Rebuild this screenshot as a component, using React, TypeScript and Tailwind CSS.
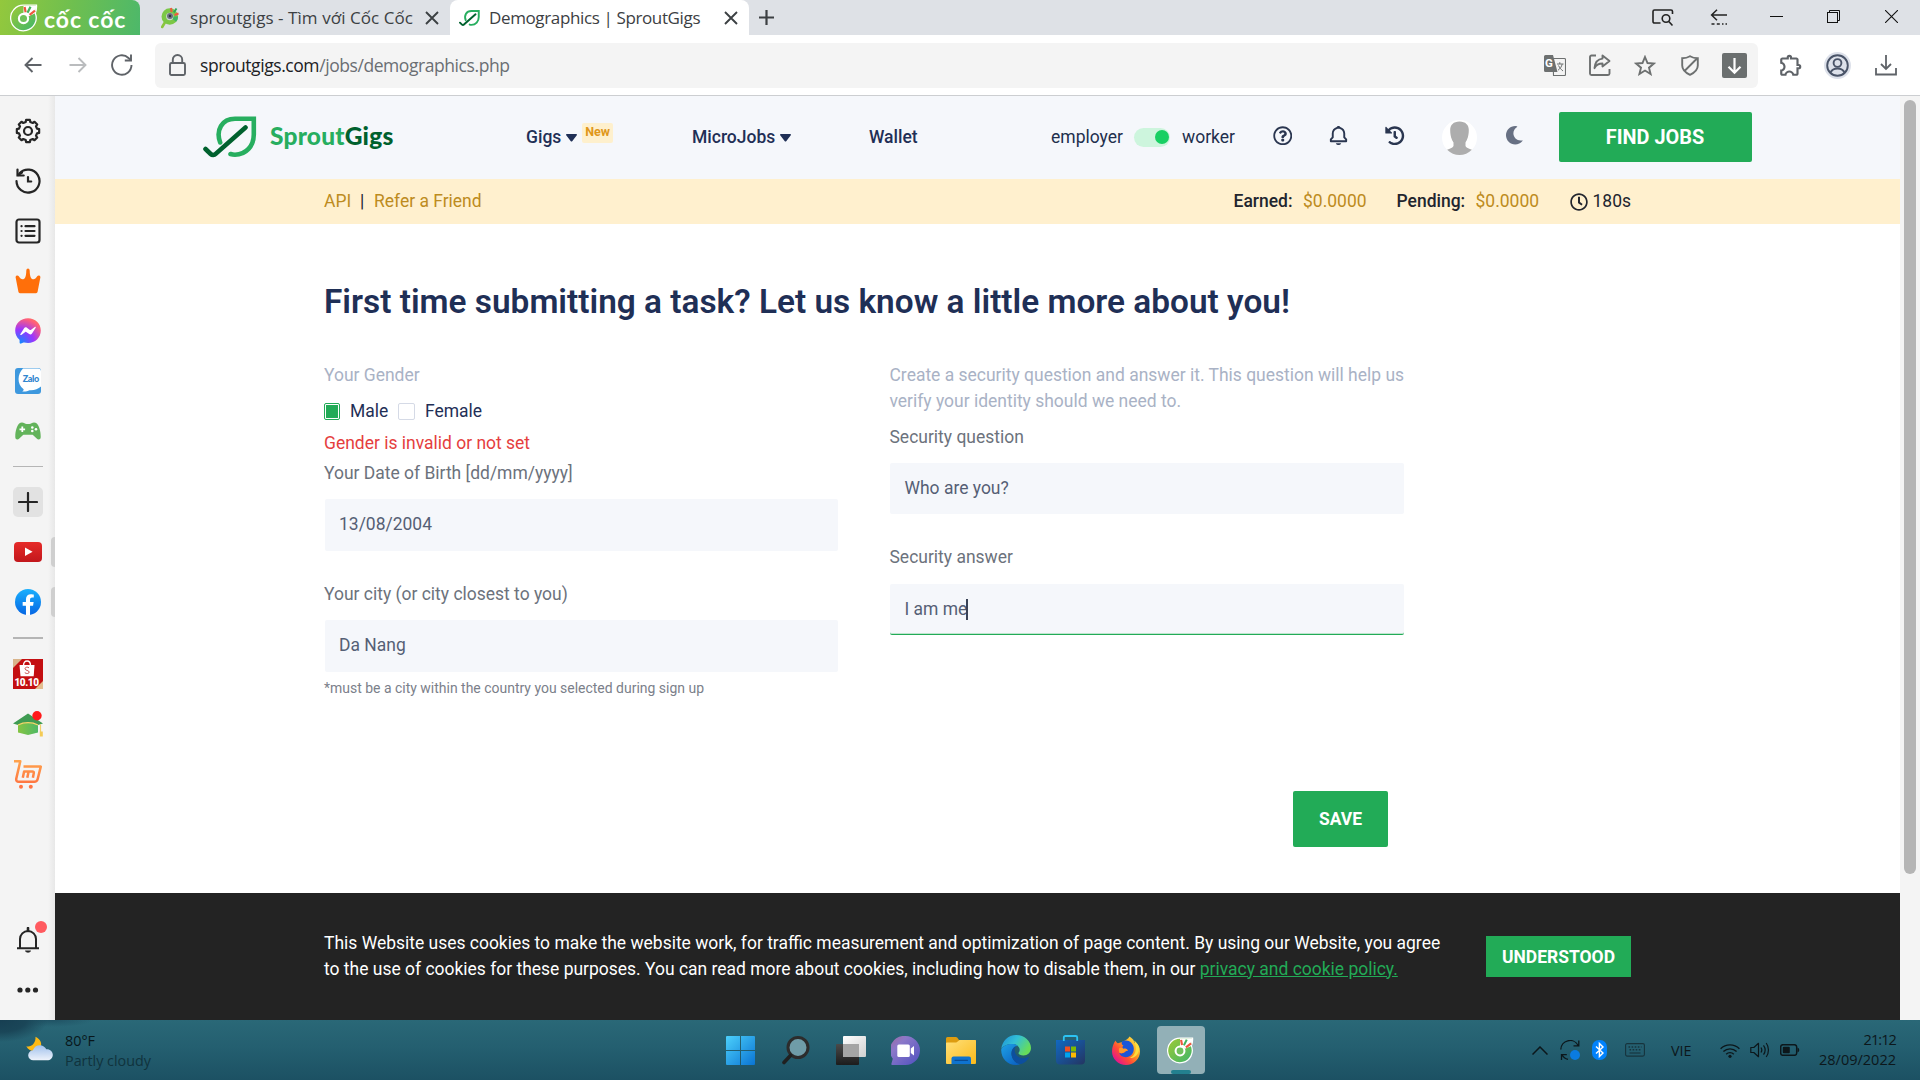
import type { ReactNode } from "react";
import { FaHistory, FaMoon, FaRegClock, FaRegQuestionCircle } from "react-icons/fa";
import { BiBell } from "react-icons/bi";
import { MdOutlineExtension } from "react-icons/md";

const SEGOE = "font-['Open_Sans',sans-serif]";

/* ---------- brand marks ---------- */

function CocCocMark({ size, id }: { size: number; id: string }) {
  return (
    <svg width={size} height={size} viewBox="0 0 28 28" fill="none">
      <defs>
        <linearGradient id={id} x1="0" y1="0" x2="1" y2="1">
          <stop offset="0.2" stopColor="#8cc63f" />
          <stop offset="1" stopColor="#3bb56b" />
        </linearGradient>
      </defs>
      <path d="M14 1.2h12.500c.2 3-.2 5.500-1.200 8A12.800 12.800 0 1 1 14 1.200z" fill={`url(#${id})`} stroke="#fff" strokeWidth="1.300" />
      <path d="M13.500 1.900 26 1.900c.1 3-.3 5.200-1.300 7.600l-6 2.800-5.200-3z" fill="#fff" />
      <circle cx="13.500" cy="14.500" r="4.600" stroke="#fff" strokeWidth="2.100" fill="#6fc15a" />
      <path d="m14.600 3 1 5.300" stroke="#f0563f" strokeWidth="2.200" />
      <path d="m20.500 2.700-3 6" stroke="#43b35c" strokeWidth="2.200" />
      <path d="m25 6.700-5.400 4.100" stroke="#f0563f" strokeWidth="2.200" />
    </svg>
  );
}

function CocSearchMark() {
  return (
    <svg width="19" height="22" viewBox="0 0 19 22" fill="none">
      <path d="M4.500 14.500 1.200 20" stroke="#8bc53f" strokeWidth="2.600" strokeLinecap="round" />
      <circle cx="8.800" cy="9.500" r="6" stroke="#7cc746" strokeWidth="4.600" fill="#c9d6cf" />
      <path d="M13.500 13.500a6 6 0 0 0 1.300-4" stroke="#3eb564" strokeWidth="4.400" />
      <circle cx="9" cy="9" r="3" fill="#6b717e" />
      <circle cx="9" cy="9" r="1.200" fill="#2f3440" />
      <path d="m10 1 .6 4M17.500 6.500 13.500 8" stroke="#f0563f" strokeWidth="2" />
      <path d="m15.500 1.500-2.700 4" stroke="#2fa55a" strokeWidth="2" />
    </svg>
  );
}

function SproutMark({ width, height, sw }: { width: number; height: number; sw: number }) {
  return (
    <svg width={width} height={height} viewBox="0 0 54 42" fill="none" strokeWidth={sw} strokeLinecap="round">
      <path d="M17.200 26.500C12.500 14 19 2.800 32 2.800h18.800v15.700c0 11.500-7.800 20.200-18.800 20.200-1.600 0-3-.2-4.500-.7" stroke="#27ae5f" />
      <path d="m2.500 33 5.200 5c1.500 1.400 3.600 1.300 5-.1L42.500 11.500" stroke="#00612e" />
    </svg>
  );
}

/* ---------- sidebar icons ---------- */

function gearPath() {
  const pts: string[] = [];
  for (let i = 0; i < 8; i++) {
    const base = (i * Math.PI) / 4;
    const steps: [number, number][] = [
      [-0.25, 9.3],
      [-0.17, 11.3],
      [0.17, 11.3],
      [0.25, 9.3],
    ];
    for (const [da, r] of steps) {
      pts.push(`${(13 + r * Math.sin(base + da)).toFixed(2)} ${(13 - r * Math.cos(base + da)).toFixed(2)}`);
    }
  }
  return `M${pts.join("L")}Z`;
}

function GearIcon() {
  return (
    <svg width="26" height="26" viewBox="0 0 26 26" fill="none" stroke="#252525" strokeWidth="2.200" strokeLinejoin="round">
      <path d={gearPath()} />
      <circle cx="13" cy="13" r="4" />
    </svg>
  );
}

function SideHistoryIcon() {
  return (
    <svg width="26" height="26" viewBox="0 0 26 26" fill="none" stroke="#252525" strokeWidth="2.200" strokeLinecap="round">
      <path d="M1.500 13A11.500 11.500 0 1 0 4.600 5.200" />
      <path d="M2.500 1.500v6h6.200" />
      <path d="M3 7 7 4.500" />
      <path d="M13 9v4.500h3.200" />
    </svg>
  );
}

function ListIcon() {
  return (
    <svg width="26" height="26" viewBox="0 0 26 26" fill="none" stroke="#252525" strokeWidth="2.200" strokeLinecap="round">
      <rect x="1.500" y="1.500" width="23" height="23" rx="2.500" />
      <path d="M10.500 8.200h9M10.500 13h9M10.500 17.800h9M6.500 8.200h.1M6.500 13h.1M6.500 17.800h.1" />
    </svg>
  );
}

function CrownIcon() {
  return (
    <svg width="26" height="26" viewBox="0 0 26 26" fill="#ff6f0a">
      <path d="M.6 9.200c0-1.800 2.300-2.300 3.200-.9 1.200 2 2.300 3 3.800 3 2.300 0 3.600-2.500 3.700-8.500C11.400-.2 14.600-.2 14.700 2.800c.1 6 1.400 8.500 3.700 8.500 1.500 0 2.600-1 3.800-3 .9-1.400 3.300-.9 3.200.9l-2.800 14.600c-.2.900-.7 1.400-1.600 1.400H5c-.9 0-1.400-.5-1.600-1.400z" />
    </svg>
  );
}

function MessengerIcon() {
  return (
    <svg width="26" height="26" viewBox="0 0 26 26">
      <defs>
        <radialGradient id="msgr" cx="0.190" cy="0.990" r="1.100">
          <stop offset="0" stopColor="#0a8dff" />
          <stop offset="0.5" stopColor="#9a35ff" />
          <stop offset="0.900" stopColor="#ff5f7a" />
          <stop offset="1" stopColor="#ff7061" />
        </radialGradient>
      </defs>
      <path d="M13 .3C5.800.3.200 5.500.200 12.500c0 3.700 1.500 6.900 4 9.100.3.300.4.600.4 1v2c0 .9.600 1.400 1.500 1l2.400-1c.2-.1.400-.1.700 0 1.200.3 2.400.5 3.800.5 7.200 0 12.800-5.300 12.800-12.500S20.200.3 13 .3z" fill="url(#msgr)" />
      <path d="m5.300 16.200 3.800-6c.6-1 1.900-1.200 2.800-.5l3 2.200c.3.200.6.200.9 0l4-3c.5-.4 1.200.2.900.8L17 15.600c-.6 1-1.900 1.200-2.800.5l-3-2.200c-.3-.2-.6-.2-.9 0l-4 3c-.6.400-1.300-.1-1-.7z" fill="#fff" />
    </svg>
  );
}

function ZaloIcon() {
  return (
    <span className="relative flex h-[26px] w-[26px] items-center justify-end">
      <svg className="absolute inset-0" width="26" height="26" viewBox="0 0 26 26">
        <rect width="26" height="26" rx="3" fill="#3d98de" />
        <path d="M8 .6h15a3 3 0 0 1 3 3v15c-3 2.500-7 4-11.500 3.600-2 1.300-5 1.500-7.300 1.200 1-.6 1.600-1.300 1.400-2.200C1.500 16 2.500 6 8 .6z" fill="#fff" />
      </svg>
      <span className="relative mr-[1.500px] mb-[5px] font-[Lato,sans-serif] text-[9px] leading-none font-black tracking-[-0.300px] text-[#2f86cf]">Zalo</span>
    </span>
  );
}

function GamepadIcon() {
  return (
    <svg width="26" height="18" viewBox="0 0 26 18">
      <path d="M4.200 1.500C5.500.3 8 .2 9.500 1.300c.7.500 1.300.6 2 .6h3c.7 0 1.300-.1 2-.6 1.500-1.100 4-1 5.300.2C24.300 4 25.900 10 25.700 15.300c-.1 2.400-2.500 2.800-4 1.300l-3.500-3.300c-.4-.4-.8-.5-1.300-.5H9.100c-.5 0-.9.100-1.300.5l-3.500 3.300c-1.500 1.500-3.900 1.100-4-1.300C.1 10 1.700 4 4.200 1.500z" fill="#63b35b" />
      <path d="M7.300 4.500v5.600M4.500 7.300h5.600" stroke="#fff" strokeWidth="1.800" />
      <circle cx="17.300" cy="5.500" r="1.300" fill="#fff" />
      <circle cx="21" cy="7.200" r="1.300" fill="#fff" />
      <circle cx="17.300" cy="9" r="1.300" fill="#fff" />
    </svg>
  );
}

function YoutubeIcon() {
  return (
    <svg width="28" height="20" viewBox="0 0 28 20">
      <defs>
        <linearGradient id="yt" x1="0" y1="0" x2="0" y2="1">
          <stop offset="0" stopColor="#e62b29" />
          <stop offset="1" stopColor="#c2171c" />
        </linearGradient>
      </defs>
      <rect width="28" height="20" rx="4" fill="url(#yt)" />
      <path d="m11 5.500 7.600 4.300L11 14z" fill="#fff" />
    </svg>
  );
}

function FacebookIcon() {
  return (
    <svg width="26" height="26" viewBox="0 0 24 24">
      <defs>
        <linearGradient id="fb" x1="0" y1="0" x2="0" y2="1">
          <stop offset="0" stopColor="#1ab0fd" />
          <stop offset="1" stopColor="#0666e4" />
        </linearGradient>
      </defs>
      <circle cx="12" cy="12" r="12" fill="url(#fb)" />
      <path d="M16.671 15.543l.532-3.470h-3.328v-2.250c0-.949.465-1.874 1.956-1.874h1.513V4.996s-1.374-.235-2.686-.235c-2.741 0-4.533 1.662-4.533 4.669v2.642H7.078v3.470h3.047v8.385a12.100 12.100 0 003.750 0v-8.385h2.796z" fill="#fff" />
    </svg>
  );
}

function ShopeeIcon() {
  return (
    <span className="relative flex h-[30px] w-[30px] items-end justify-center overflow-hidden bg-[#c40f12]">
      <svg className="absolute inset-0" width="30" height="30" viewBox="0 0 30 30" fill="none">
        <path d="M0 0h9L0 9z" fill="#d9b48b" />
        <path d="M30 30h-8l8-8z" fill="#e3bd8f" />
        <path d="M10.500 6.500C10.500 3.500 12 2 14 2s3.500 1.500 3.500 4.500" stroke="#fff" strokeWidth="1.400" />
        <path d="M6.500 6h15l-.8 11.300H7.500z" fill="#fff" />
        <path d="M16 8.800c-1.500-1.200-4-.6-4 .9 0 2 4.200 1.500 4.200 3.300 0 1.800-2.700 2-4.400.7" stroke="#c8504f" strokeWidth="1" />
      </svg>
      <span className="relative mr-[2px] mb-[2.500px] font-[Roboto,sans-serif] text-[10px] leading-[9px] font-black tracking-[-0.400px] text-white">10.10</span>
    </span>
  );
}

function HatIcon() {
  return (
    <svg width="30" height="28" viewBox="0 0 30 28">
      <defs>
        <linearGradient id="hat" x1="0" y1="0" x2="1" y2="0">
          <stop offset="0" stopColor="#85c442" />
          <stop offset="1" stopColor="#4fb966" />
        </linearGradient>
      </defs>
      <path d="M5 12h20v10.500l-10 2.500-10-2.500z" fill="url(#hat)" />
      <path d="M0 13.500 15 3.500l15 10-5 1.500-10-2.300-10 2.300z" fill="#3f9b52" />
      <path d="M5 15c6-3 14-3 20 0" stroke="#f6d66a" strokeWidth="1.300" fill="none" />
      <path d="M27.500 14.500v8" stroke="#f3cf69" strokeWidth="1.200" />
      <path d="M26.800 21.500h3v5h-3z" fill="#f4cb55" />
      <circle cx="24" cy="5.800" r="4.700" fill="#ff1a1a" />
    </svg>
  );
}

function CartIcon() {
  return (
    <svg width="28" height="30" viewBox="0 0 28 30" fill="none">
      <defs>
        <linearGradient id="cart" gradientUnits="userSpaceOnUse" x1="14" y1="0" x2="14" y2="30">
          <stop offset="0" stopColor="#ffa64d" />
          <stop offset="1" stopColor="#ff6b3f" />
        </linearGradient>
      </defs>
      <g stroke="url(#cart)" strokeWidth="2.500" strokeLinejoin="round">
        <path d="M0 2.300h6.300L2.300 19.500c-.4 2.200.6 3.300 2.500 3.300h15.500c1.800 0 2.900-.9 3.300-2.500L26.800 7.600H9.500" />
        <path d="M8.800 18.800l1.300-6.300h8.200c1.200 0 1.700.6 1.500 1.600l-.9 4.700M14.600 12.500l-1.300 6.300" />
      </g>
      <circle cx="7" cy="27.800" r="2" fill="#ff7442" />
      <circle cx="16.800" cy="27.800" r="2" fill="#ff7442" />
    </svg>
  );
}

function SideCell({ children, handle }: { children: ReactNode; handle?: boolean }) {
  return (
    <div className="relative flex h-[50px] w-full items-center">
      <div className="flex w-[55px] items-center justify-center">{children}</div>
      {handle && <span className="absolute top-[10px] right-0 h-[30px] w-1 rounded-l-[4px] bg-[#cfcfcf]" />}
    </div>
  );
}

function Sidebar() {
  return (
    <aside className="flex w-[55px] shrink-0 flex-col bg-[linear-gradient(to_right,#f4f4f4_0,#f4f4f4_48px,#e8e8e8_55px)] pt-[10px]">
      <SideCell><GearIcon /></SideCell>
      <SideCell><SideHistoryIcon /></SideCell>
      <SideCell><ListIcon /></SideCell>
      <SideCell><CrownIcon /></SideCell>
      <SideCell><MessengerIcon /></SideCell>
      <SideCell><ZaloIcon /></SideCell>
      <SideCell><GamepadIcon /></SideCell>
      <div className="mt-[10px] mb-[10px] ml-[13px] h-px w-[30px] bg-[#b5b5b5]" />
      <SideCell>
        <span className="flex h-[30px] w-[30px] items-center justify-center rounded-[5px] bg-[#e2e2e2]">
          <svg width="20" height="20" viewBox="0 0 20 20" stroke="#252525" strokeWidth="2.200" strokeLinecap="round">
            <path d="M10 1v18M1 10h18" />
          </svg>
        </span>
      </SideCell>
      <SideCell handle><YoutubeIcon /></SideCell>
      <SideCell handle><FacebookIcon /></SideCell>
      <div className="mt-[10px] mb-[10px] ml-[13px] h-[2px] w-[30px] bg-[#b5b5b5]" />
      <SideCell><ShopeeIcon /></SideCell>
      <SideCell><HatIcon /></SideCell>
      <SideCell><CartIcon /></SideCell>
      <div className="mt-auto" />
      <SideCell>
        <svg width="24" height="26" viewBox="0 0 24 26" fill="none" stroke="#252525" strokeWidth="2">
          <path d="M4 21v-9a8 8 0 0 1 16 0v9M1 21.300h22" />
          <path d="M12 1v3" strokeWidth="2.600" strokeLinecap="round" />
          <path d="M9.500 24c1 1.500 4 1.500 5 0z" fill="#252525" strokeWidth="1" />
        </svg>
        <span className="absolute top-[6px] left-[35px] h-[12px] w-[12px] rounded-full bg-[#ff5a5f]" />
      </SideCell>
      <SideCell>
        <svg width="22" height="6" viewBox="0 0 22 6" fill="#252525">
          <circle cx="3" cy="3" r="2.600" />
          <circle cx="10.800" cy="3" r="2.600" />
          <circle cx="18.500" cy="3" r="2.600" />
        </svg>
      </SideCell>
      <div className="h-[5px]" />
    </aside>
  );
}

/* ---------- browser chrome ---------- */

function CloseX() {
  return (
    <svg width="14" height="14" viewBox="0 0 14 14" fill="none" stroke="#3c4043" strokeWidth="1.900">
      <path d="m1 1 12 12M13 1 1 13" />
    </svg>
  );
}

function TabStrip() {
  return (
    <div className="flex h-[35px] bg-[#dee1e6] text-[#3c4043]">
      <div className="flex w-[140px] shrink-0 items-center rounded-tr-[8px] bg-[linear-gradient(100deg,#93c83d_0%,#6fbf4f_50%,#4db86a_100%)] pl-[10px]">
        <CocCocMark size={28} id="cc-tab" />
        <span className="mt-[3px] ml-[6px] font-[Lato,sans-serif] text-[23px] leading-[32px] font-bold tracking-[0.900px] whitespace-nowrap text-white">cốc cốc</span>
      </div>
      <div className="flex w-[310px] shrink-0 items-center pl-[21px]">
        <CocSearchMark />
        <span className={`${SEGOE} ml-[10px] w-[235px] text-[17px] tracking-[0.060px] whitespace-nowrap`}>sproutgigs - Tìm với Cốc Cốc</span>
        <CloseX />
      </div>
      <div className="flex w-[299px] shrink-0 items-center rounded-t-[8px] bg-white pl-[9px]">
        <SproutMark width={21} height={18} sw={5} />
        <span className={`${SEGOE} ml-[9px] w-[235px] text-[17px] tracking-[-0.370px] whitespace-nowrap`}>Demographics | SproutGigs</span>
        <CloseX />
      </div>
      <div className="flex flex-1 items-center pl-[10px]">
        <svg width="15" height="15" viewBox="0 0 15 15" stroke="#3c4043" strokeWidth="2.200">
          <path d="M7.500 0v15M0 7.500h15" />
        </svg>
      </div>
      <div className="flex items-center pr-[22px]">
        <svg width="22" height="18" viewBox="0 0 22 18" fill="none" stroke="#222" strokeWidth="1.600">
          <path d="M8.500 14H2.500A1.500 1.500 0 0 1 1 12.500v-10A1.500 1.500 0 0 1 2.500 1h16.500A1.500 1.500 0 0 1 20.500 2.500v2.500" />
          <circle cx="14" cy="9.500" r="3.800" />
          <path d="m16.800 12.500 3.700 4" />
        </svg>
        <svg className="ml-[36px]" width="18" height="17" viewBox="0 0 18 17" fill="none" stroke="#222" strokeWidth="1.500">
          <path d="M1.500 6h15.500M7 .8 1.600 6 7 11.200" />
          <path d="M1.500 15h3M6.800 15h3M12 15h1.500M15.500 15h1.500" />
        </svg>
        <svg className="ml-[42px]" width="13" height="13" viewBox="0 0 13 13" stroke="#111" strokeWidth="1">
          <path d="M0 5.500h13" />
        </svg>
        <svg className="mb-[2px] ml-[44px]" width="13" height="13" viewBox="0 0 13 13" fill="none" stroke="#111" strokeWidth="1">
          <rect x="0.500" y="2.500" width="10" height="10" />
          <path d="M2.500 2.500v-2h10v10h-2" />
        </svg>
        <svg className="mb-[2px] ml-[45px]" width="13" height="13" viewBox="0 0 13 13" stroke="#111" strokeWidth="1.100">
          <path d="m0 0 13 13M13 0 0 13" />
        </svg>
      </div>
    </div>
  );
}

function ToolIcon({ children }: { children: ReactNode }) {
  return <span className="flex w-[45px] items-center justify-center">{children}</span>;
}

function Toolbar() {
  return (
    <div className="flex h-[61px] items-center border-b border-[#ccced1] bg-white">
      <div className="flex w-[155px] shrink-0 items-center pl-[24px]">
        <svg width="18" height="16" viewBox="0 0 18 16" fill="none" stroke="#5f6368" strokeWidth="1.900">
          <path d="M17.500 8H1.800M8.500 1 1.500 8l7 7" />
        </svg>
        <svg className="ml-[27px]" width="18" height="16" viewBox="0 0 18 16" fill="none" stroke="#babcbe" strokeWidth="1.900">
          <path d="M.5 8h15.700M9.500 1l7 7-7 7" />
        </svg>
        <svg className="ml-[24px]" width="22" height="22" viewBox="0 0 22 22" fill="none" stroke="#5f6368" strokeWidth="1.900">
          <path d="M20.500 11A9.700 9.700 0 1 1 17.500 4L20 6" />
          <path d="M20 .5v6h-6.200" />
        </svg>
      </div>
      <div className="flex h-[45px] w-[1603px] shrink-0 items-center rounded-[6px] bg-[#f4f4f4] pr-px pl-[14px]">
        <svg width="17" height="22" viewBox="0 0 17 22" fill="none" stroke="#5f6368" strokeWidth="1.900">
          <rect x="1" y="9" width="15" height="12" rx="1.500" />
          <path d="M3.800 9V5.700C3.800 3 5.800 1 8.500 1s4.700 2 4.700 4.700V9" />
        </svg>
        <span className={`${SEGOE} mt-px ml-[14px] text-[17.500px] tracking-[-0.430px] whitespace-nowrap text-[#6a6e73]`}>
          <span className="text-[#202124]">sproutgigs.com</span>/jobs/demographics.php
        </span>
        <div className="ml-auto flex items-center">
          <ToolIcon>
            <span className="relative flex h-[21px] w-[22px]">
              <svg className="absolute inset-0" width="22" height="21" viewBox="0 0 22 21" fill="none">
                <path d="M9 3.500h11.500a1 1 0 0 1 1 1V19.500a1 1 0 0 1-1 1H9.500z" stroke="#6d7070" strokeWidth="1.100" />
                <path d="M1.500 0h7.500l4.500 17H1.500A1.500 1.500 0 0 1 0 15.500v-14A1.500 1.500 0 0 1 1.500 0z" fill="#6d7070" />
                <path d="M13 9h6.500M15.800 7.200V9M18.200 9c-.6 2.800-2.200 5-4.200 6.200M14.500 10.500c1 2 2.500 4 4.500 5.500" stroke="#6d7070" strokeWidth="1" />
              </svg>
              <span className="relative ml-[1.500px] font-[Roboto,sans-serif] text-[11.500px] leading-[17px] font-bold text-white">G</span>
            </span>
          </ToolIcon>
          <ToolIcon>
            <svg width="22" height="22" viewBox="0 0 22 22" fill="none" stroke="#6d7070" strokeWidth="1.900" strokeLinejoin="round">
              <path d="M7 1.500H2.500a1.500 1.500 0 0 0-1.500 1.500v16.500A1.500 1.500 0 0 0 2.500 21h16.500a1.500 1.500 0 0 0 1.500-1.500V15" />
              <path d="M13.500 1.500 20.500 7l-7 5.500V9.500C9.500 9.500 7 11 5.500 14.200 6 8.500 8.500 5 13.500 4.600z" />
            </svg>
          </ToolIcon>
          <ToolIcon>
            <svg width="22" height="21" viewBox="0 0 22 21" fill="none" stroke="#6d7070" strokeWidth="1.900" strokeLinejoin="miter">
              <path d="m11 2 2.500 6 6.500.5-5 4.200 1.600 6.300L11 15.500 5.400 19 7 12.700 2 8.500 8.500 8z" />
            </svg>
          </ToolIcon>
          <ToolIcon>
            <svg width="18" height="21" viewBox="0 0 18 21" fill="none" stroke="#6d7070" strokeWidth="1.900">
              <path d="M9 1.200c2.500 1.500 5 2 7.800 2v7.300c0 4-3.500 7.300-7.800 9.300-4.300-2-7.800-5.300-7.800-9.300V3.200C4 3.200 6.500 2.700 9 1.200zM15.500 4 3.500 16" />
            </svg>
          </ToolIcon>
          <ToolIcon>
            <svg width="25" height="25" viewBox="0 0 25 25" fill="none">
              <rect width="25" height="25" rx="2" fill="#6b6f6f" />
              <path d="M12.500 5v15M6.500 13.800l6 6 6-6" stroke="#fff" strokeWidth="2.200" />
            </svg>
          </ToolIcon>
        </div>
      </div>
      <div className="flex flex-1 items-center pl-[20px]">
        <MdOutlineExtension size={26} color="#5f6368" />
        <span className="ml-[19.500px] flex h-[27px] w-[27px] items-center justify-center rounded-full bg-[#dde1ea]">
          <svg width="23" height="23" viewBox="0 0 23 23" fill="none" stroke="#4a5468" strokeWidth="1.900">
            <circle cx="11.500" cy="11.500" r="10.300" />
            <circle cx="11.500" cy="9" r="3.900" />
            <path d="M4.500 18.500c1.500-3 4-4 7-4s5.500 1 7 4" />
          </svg>
        </span>
        <svg className="ml-[24px]" width="22" height="21" viewBox="0 0 22 21" fill="none" stroke="#5f6368" strokeWidth="1.800">
          <path d="M11 0v13.500M6 9l5 5 5-5M1 13v6.500h20V13" />
        </svg>
      </div>
    </div>
  );
}

/* ---------- page ---------- */

function Caret() {
  return (
    <svg width="11" height="8" viewBox="0 0 11 8" fill="#1f2f56">
      <path d="M.8 0h9.400c.7 0 1 .8.6 1.300L6.200 7.200c-.4.500-1 .5-1.400 0L.2 1.300C-.2.8.1 0 .8 0z" />
    </svg>
  );
}

function SiteHeader() {
  return (
    <header className="flex h-[83px] shrink-0 items-center bg-[#f5f7fb] pb-px pl-[148px] text-[17.500px] font-medium text-[#1f2f56]">
      <div className="flex w-[323px] shrink-0 items-center">
        <SproutMark width={54} height={42} sw={4.6} />
        <span className="mb-[1px] ml-[13px] font-[Lato,sans-serif] text-[24.500px] leading-none font-black tracking-[0.200px] text-[#27ae5f]">
          Sprout<span className="text-[#00612e]">Gigs</span>
        </span>
      </div>
      <nav className="mt-px flex w-[525px] shrink-0 items-center">
        <div className="flex w-[166px] items-center">
          <span className="w-[40px]">Gigs</span>
          <Caret />
          <span className="mb-[10px] ml-[5px] flex h-[20px] w-[31px] items-center justify-center rounded-[2px] bg-[#fef0cd] text-[12.500px] font-bold text-[#df971a]">New</span>
        </div>
        <div className="flex w-[177px] items-center">
          <span className="w-[88px]">MicroJobs</span>
          <Caret />
        </div>
        <span>Wallet</span>
      </nav>
      <div className="flex items-center">
        <span className="mt-px w-[83px] font-normal text-[#222f4d]">employer</span>
        <span className="flex h-[19px] w-[36px] items-center justify-end rounded-full bg-[#cdf5dd] pr-px">
          <span className="h-[14px] w-[14px] rounded-full bg-[#18cf63]" />
        </span>
        <span className="mt-px ml-[12px] w-[90.500px] font-normal text-[#222f4d]">worker</span>
        <FaRegQuestionCircle className="mb-[3px]" size={19.5} color="#2a3650" />
        <BiBell className="mb-[3px] ml-[35px]" size={23} color="#2a3650" />
        <FaHistory className="mb-[3px] ml-[35px]" size={19.5} color="#2a3650" />
        <svg className="ml-[37.500px]" width="35" height="35" viewBox="0 0 35 35">
          <clipPath id="avatar"><circle cx="17.500" cy="17.500" r="17.500" /></clipPath>
          <g clipPath="url(#avatar)">
            <rect width="35" height="35" fill="#fff" />
            <path d="M17.500 1.500c6 0 9.300 3.500 9.300 8.500 0 6-1.500 9.500-3.300 12.500v3.500c1 2 5 3.300 8 4.500V35H3.500v-4.500c3-1.200 7-2.500 8-4.500v-3.500C9.700 19.500 8.200 16 8.200 10c0-5 3.300-8.500 9.300-8.500z" fill="#adadad" />
          </g>
        </svg>
        <FaMoon className="mb-[3px] ml-[28px]" size={18.5} color="#677083" />
        <button className="ml-[35px] h-[50px] w-[193px] rounded-[2px] bg-[#22ab57] pt-px text-[19.900px] font-bold text-white">FIND JOBS</button>
      </div>
    </header>
  );
}

function StatusStrip() {
  return (
    <div className="flex h-[45px] shrink-0 items-center bg-[#fff0ce] pr-[269px] pl-[269px] text-[#22252e]">
      <span className="w-[36px] text-[#bd8b20]">API</span>
      <span className="w-[14px]">|</span>
      <span className="text-[#bd8b20]">Refer a Friend</span>
      <span className="ml-auto w-[69.500px] font-medium">Earned:</span>
      <span className="w-[93.500px] text-[#bd8b20]">$0.0000</span>
      <span className="w-[79px] font-medium">Pending:</span>
      <span className="w-[94px] text-[#bd8b20]">$0.0000</span>
      <FaRegClock className="mt-px mr-[5px]" size={18} />
      <span>180s</span>
    </div>
  );
}

function Label({ children, className = "" }: { children: ReactNode; className?: string }) {
  return <div className={`h-[26px] leading-[26px] text-[#6c727c] ${className}`}>{children}</div>;
}

function DemographicsForm() {
  return (
    <main className="flex-1 bg-white pt-[53px] pl-[269px]">
      <h1 className="h-[50px] text-[33.380px] leading-[50px] font-semibold whitespace-nowrap text-[#1f2f56]">
        First time submitting a task? Let us know a little more about you!
      </h1>
      <div className="mt-[35px] flex">
        <div className="w-[565.500px] shrink-0">
          <div className="h-[26px] leading-[26px] text-[#a9b2c5]">Your Gender</div>
          <div className="mt-[10px] flex h-[26px] items-center leading-[26px] text-[#1f2f56]">
            <span className="flex h-[17px] w-[16px] items-center justify-center rounded-[2px] border border-[#22ab57] bg-white">
              <span className="h-[13px] w-[12px] bg-[#22ab57]" />
            </span>
            <span className="ml-[10px] w-[48px]">Male</span>
            <span className="h-[17px] w-[17px] rounded-[2px] border border-[#d5dae6] bg-white" />
            <span className="ml-[10px]">Female</span>
          </div>
          <div className="mt-[6px] h-[26px] leading-[26px] text-[#e53e3e]">Gender is invalid or not set</div>
          <Label className="mt-[4px]">Your Date of Birth [dd/mm/yyyy]</Label>
          <div className="mt-[13px] ml-px flex h-[52px] w-[513px] items-center rounded-[2px] bg-[#f5f7fb] pb-[2px] pl-[14px] text-[#555f75]">13/08/2004</div>
          <Label className="mt-[30px]">Your city (or city closest to you)</Label>
          <div className="mt-[13px] ml-px flex h-[52px] w-[513px] items-center rounded-[2px] bg-[#f5f7fb] pb-[2px] pl-[14px] text-[#555f75]">Da Nang</div>
          <div className="mt-[6px] h-[20px] text-[13.980px] leading-[20px] text-[#7b808a]">*must be a city within the country you selected during sign up</div>
        </div>
        <div className="w-[515px]">
          <p className="text-[17.480px] leading-[26px] whitespace-nowrap text-[#a9b2c5]">
            Create a security question and answer it. This question will help us
            <br />
            verify your identity should we need to.
          </p>
          <Label className="mt-[10px]">Security question</Label>
          <div className="mt-[13px] flex h-[51px] w-[514px] items-center rounded-[2px] bg-[#f5f7fb] pl-[15px] text-[#555f75]">Who are you?</div>
          <Label className="mt-[30px]">Security answer</Label>
          <div className="mt-[14px] flex h-[51px] w-[514px] items-center rounded-[2px] border-b border-[#22ab57] bg-[#f5f7fb] pl-[15px] text-[#555f75] shadow-[inset_0_-1px_0_#bfe5cf]">
            I am me
            <span className="-ml-px h-[21px] w-[2px] bg-[#3a4356]" />
          </div>
          <div className="mt-[156px] flex justify-end pr-[16.500px]">
            <button className="h-[56px] w-[95px] rounded-[2px] bg-[#22ab57] font-bold text-white">SAVE</button>
          </div>
        </div>
      </div>
    </main>
  );
}

function CookieBar() {
  return (
    <div className="flex h-[127px] shrink-0 items-center bg-[#232323] pl-[269px] text-white">
      <p className="mb-[2px] w-[1162px] text-[17.480px] leading-[26px] whitespace-nowrap">
        This Website uses cookies to make the website work, for traffic measurement and optimization of page content. By using our Website, you agree
        <br />
        to the use of cookies for these purposes. You can read more about cookies, including how to disable them, in our{" "}
        <a className="text-[#22ab57] underline">privacy and cookie policy.</a>
      </p>
      <button className="h-[41px] w-[145px] bg-[#22ab57] pt-px font-bold text-white">UNDERSTOOD</button>
    </div>
  );
}

/* ---------- taskbar ---------- */

function Task({ children }: { children: ReactNode }) {
  return <span className="flex h-full w-[55px] items-center justify-center">{children}</span>;
}

function TaskbarApps() {
  return (
    <div className="flex h-full">
      <Task>
        <svg width="29" height="29" viewBox="0 0 29 29">
          <defs>
            <linearGradient id="win" gradientUnits="userSpaceOnUse" x1="0" y1="0" x2="29" y2="29">
              <stop offset="0" stopColor="#4cd0fb" />
              <stop offset="1" stopColor="#0a74d3" />
            </linearGradient>
          </defs>
          <path d="M0 1a1 1 0 0 1 1-1h13v14H0zM15 0h13a1 1 0 0 1 1 1v13H15zM0 15h14v14H1a1 1 0 0 1-1-1zM15 15h14v13a1 1 0 0 1-1 1H15z" fill="url(#win)" />
        </svg>
      </Task>
      <Task>
        <svg width="28" height="29" viewBox="0 0 28 29" fill="none">
          <circle cx="16" cy="11.500" r="10" fill="#6f9ca8" stroke="#2c2c2c" strokeWidth="3" />
          <path d="m8.500 19.500-6.500 7" stroke="#202020" strokeWidth="3.600" strokeLinecap="round" />
        </svg>
      </Task>
      <Task>
        <svg width="30" height="29" viewBox="0 0 30 29">
          <defs>
            <linearGradient id="tvb" x1="0" y1="0" x2="0" y2="1">
              <stop offset="0" stopColor="#4a4a4a" />
              <stop offset="1" stopColor="#1c1c1c" />
            </linearGradient>
            <linearGradient id="tvf" x1="0" y1="0" x2="1" y2="1">
              <stop offset="0" stopColor="#fff" />
              <stop offset="1" stopColor="#d0d0d0" />
            </linearGradient>
          </defs>
          <rect x="0" y="8" width="23" height="21" rx="1" fill="url(#tvb)" />
          <rect x="7" y="0" width="23" height="21" rx="1" fill="url(#tvf)" />
          <path d="M7 8h16v13H7z" fill="#a5a5a5" />
        </svg>
      </Task>
      <Task>
        <svg width="29" height="29" viewBox="0 0 29 29">
          <defs>
            <linearGradient id="chat" x1="0" y1="0" x2="1" y2="1">
              <stop offset="0" stopColor="#a06a9f" />
              <stop offset="0.300" stopColor="#8b78c9" />
              <stop offset="1" stopColor="#4f50bf" />
            </linearGradient>
          </defs>
          <path d="M14.500 0a14.300 14.300 0 1 1 0 29H1.200c-.8 0-1-.6-.8-1.200l1.400-5A14.300 14.300 0 0 1 14.500 0z" fill="url(#chat)" />
          <rect x="6.300" y="8.500" width="12.500" height="12.500" rx="1.500" fill="#fff" />
          <path d="M19.800 12.500 23 10v9.500l-3.200-2.500z" fill="#fff" />
        </svg>
      </Task>
      <Task>
        <svg width="30" height="27" viewBox="0 0 30 27">
          <defs>
            <linearGradient id="fold" x1="0" y1="0" x2="1" y2="1">
              <stop offset="0" stopColor="#ffe07a" />
              <stop offset="1" stopColor="#fbba1a" />
            </linearGradient>
          </defs>
          <path d="M0 1.500A1.500 1.500 0 0 1 1.500 0h8.300c.6 0 1 .2 1.400.6L13 3h15.500A1.500 1.500 0 0 1 30 4.500V10H0z" fill="#dd9c10" />
          <path d="M0 6.500c0-.6.400-1 1-1h8.500c.6 0 1-.1 1.500-.5l2-1.500c.4-.4.800-.5 1.400-.5H29c.6 0 1 .4 1 1V26a1 1 0 0 1-1 1H1a1 1 0 0 1-1-1z" fill="url(#fold)" />
          <path d="M5.500 27v-5.500a2 2 0 0 1 2-2h15.500a2 2 0 0 1 2 2V27z" fill="#0f73ce" />
          <path d="M9 23.300h12.500" stroke="#0a4c94" strokeWidth="1.200" strokeLinecap="round" />
        </svg>
      </Task>
      <Task>
        <svg width="30" height="30" viewBox="0 0 30 30">
          <defs>
            <linearGradient id="edgeTop" x1="0" y1="0" x2="1" y2="0.500">
              <stop offset="0" stopColor="#1c8fd8" />
              <stop offset="0.500" stopColor="#33c0d6" />
              <stop offset="1" stopColor="#66dd5a" />
            </linearGradient>
            <linearGradient id="edgeLow" x1="0" y1="0" x2="0.800" y2="1">
              <stop offset="0" stopColor="#1fa2e6" />
              <stop offset="1" stopColor="#0b62c2" />
            </linearGradient>
          </defs>
          <path d="M.3 14C1 6 7.300 0 15 0c8.700 0 15 6.300 15 13 0 4.500-3.500 7.500-7.500 7.500-3 0-5-1-5-2.200 0-.9 1.200-1.500 1.200-3.500 0-3-2.700-5.800-7.200-5.800C6 9 2 11 .3 14z" fill="url(#edgeTop)" />
          <path d="M.2 14.500C2 11 6 9 11.500 9c2 0 4 .6 5.300 1.700-3 .2-6.300 3-6.300 7.800 0 5 4 10 9.500 10.300-1.700.8-3.300 1.200-5 1.200C6.500 30 0 23.200.2 14.500z" fill="url(#edgeLow)" />
          <path d="M10.500 18.500c0-3.500 2-6.500 4.500-7.500-1 1.500-1.500 3-1.300 5 .4 4 4 7.300 8.500 7.300 2 0 3.800-.7 5-1.300.6-.3 1 .2.700.7C25.500 26.500 22 29 19.500 29c-5 0-9-5.300-9-10.500z" fill="#0d4f9e" />
        </svg>
      </Task>
      <Task>
        <svg width="29" height="30" viewBox="0 0 29 30">
          <defs>
            <linearGradient id="store" x1="0" y1="0" x2="1" y2="1">
              <stop offset="0" stopColor="#1169c2" />
              <stop offset="1" stopColor="#243561" />
            </linearGradient>
          </defs>
          <path d="M0 5h29v20.500a4 4 0 0 1-4 4H4a4 4 0 0 1-4-4z" fill="url(#store)" />
          <path d="M7.800 6V2.500a1.500 1.500 0 0 1 1.500-1.500h10.400a1.500 1.500 0 0 1 1.500 1.500V6" fill="none" stroke="#2cc3f2" strokeWidth="1.800" />
          <path d="M9 11.500h5v5H9z" fill="#f25022" />
          <path d="M15 11.500h5v5h-5z" fill="#7fba00" />
          <path d="M9 17.500h5v5H9z" fill="#00a4ef" />
          <path d="M15 17.500h5v5h-5z" fill="#ffb900" />
        </svg>
      </Task>
      <Task>
        <svg width="28" height="29" viewBox="0 0 28 29">
          <defs>
            <linearGradient id="ffx" x1="0.900" y1="0.100" x2="0.150" y2="0.850">
              <stop offset="0" stopColor="#ffe54a" />
              <stop offset="0.400" stopColor="#ff9a1f" />
              <stop offset="0.700" stopColor="#ff4b36" />
              <stop offset="1" stopColor="#e6178a" />
            </linearGradient>
          </defs>
          <path d="M3.500 4.500c.6 1.500 1.500 2.400 2.500 2.800L10 6c4-2 6-3 7.500-5.500 3 1.800 4.500 4 5 6.500.5-.4.700-1 .7-1.700C26.500 8.500 28 11.500 28 15.500 28 23 21.700 29 14 29S0 23 0 15.500C0 11 1.500 7.500 3.500 4.500z" fill="url(#ffx)" />
          <path d="M10 5.500c5-3 11.500.5 11.800 7 .2 5-3.500 8.700-8 8.700-3.500 0-6-2-6.500-4.200 2 .8 4 .5 5.500-1 1-.9 2-1.300 3-1.300-.5-1.700-2.500-1.900-4.300-1.500C10.300 12 10 10.500 11.500 9.500 10 9 9 7.500 10 5.500z" fill="#1c56d8" />
          <path d="M7 12.500c1-1 3-.8 4.500.2 1.700-.3 3.800.2 4.300 1.800-1 0-2 .4-3 1.300-1.500 1.500-3.500 1.800-5.500 1-.5-1.500-.6-3-.3-4.300z" fill="#ff9b2b" />
          <path d="M18.500 1c3.500 3 5.800 7 5.300 12.500-.4 4-3 7.500-6.300 8.500 4.500.5 9-3 9.500-8.500C27.300 8 22.500 5.500 18.500 1z" fill="#ffe23e" opacity="0.900" />
        </svg>
      </Task>
      <Task>
        <span className="relative flex h-[48px] w-[48px] items-center justify-center rounded-[4px] bg-[#92b0b7]">
          <CocCocMark size={27} id="cc-task" />
          <span className="absolute bottom-0 left-[14px] h-1 w-5 rounded-full bg-[#23808f]" />
        </span>
      </Task>
    </div>
  );
}

function Tray() {
  const ink = "#0c171b";
  return (
    <div className={`${SEGOE} ml-auto flex h-full items-center text-[14.300px] text-[#0c171b]`}>
      <svg width="16" height="9" viewBox="0 0 16 9" fill="none" stroke={ink} strokeWidth="1.500">
        <path d="m.5 8.500 7.500-7.500 7.500 7.500" />
      </svg>
      <svg className="ml-[12px]" width="20" height="20" viewBox="0 0 20 20" fill="none" stroke={ink} strokeWidth="1.300">
        <path d="M.8 9.500A9.200 9.200 0 0 1 18 5.200M18.800.5v5.300h-5.300M8 19.300c-2.500-.4-4.800-2-6-4.500M1.500 20v-5.300h5.300" />
        <circle cx="15" cy="15" r="5" fill="#0a7be0" stroke="none" />
      </svg>
      <svg className="ml-[12px]" width="15" height="20" viewBox="0 0 15 20" fill="none">
        <rect width="15" height="20" rx="7" fill="#0082fc" />
        <path d="m4 6.500 7 6.500-3.600 3.500v-13L11 7l-7 6.500" stroke="#fff" strokeWidth="1.400" />
      </svg>
      <svg className="ml-[18px]" width="20" height="14" viewBox="0 0 20 14" fill="none" stroke="#17343d" strokeWidth="1.100">
        <rect x="0.600" y="0.600" width="18.800" height="12.500" rx="1.500" />
        <path d="M3.500 4h13M4.500 6.800h11" strokeDasharray="1.600 1.500" strokeWidth="1.500" />
        <path d="M4.500 10h11" />
      </svg>
      <span className="mt-px ml-[26px] w-[49px]">VIE</span>
      <svg width="20" height="15" viewBox="0 0 20 15" fill="none" stroke={ink} strokeWidth="1.400">
        <path d="M.6 5.800a13.300 13.300 0 0 1 18.800 0M3.400 8.600a9.300 9.300 0 0 1 13.200 0M6.200 11.200a5.400 5.400 0 0 1 7.600 0" />
        <circle cx="10" cy="13.300" r="1.600" fill={ink} stroke="none" />
      </svg>
      <svg className="ml-[10px]" width="20" height="16" viewBox="0 0 20 16" fill="none" stroke={ink} strokeWidth="1.200" strokeLinejoin="round">
        <path d="M.8 5.500h3L8.500 1.300v13.400L3.800 10.500h-3zM11 5.500c1 1.500 1 3.500 0 5M13.500 3.300c2 2.800 2 6.600 0 9.400M16.200 1c3 4 3 10 0 14" />
      </svg>
      <svg className="ml-[10px]" width="20" height="12" viewBox="0 0 20 12" fill="none">
        <rect x="0.700" y="0.700" width="16" height="10.600" rx="2.300" stroke={ink} strokeWidth="1.500" />
        <rect x="2.800" y="2.800" width="7" height="6.400" rx="1" fill={ink} />
        <path d="M17.500 3.800c2.300 0 2.300 4.400 0 4.400z" fill={ink} />
      </svg>
      <div className="mr-[24px] flex w-[96px] flex-col items-end text-[14.500px] leading-[20px]">
        <span className="tracking-[-0.900px]">21:12</span>
        <span>28/09/2022</span>
      </div>
    </div>
  );
}

function Taskbar() {
  return (
    <div className="flex h-[60px] shrink-0 items-center bg-[radial-gradient(ellipse_48px_22px_at_0_0,#173f52_0%,#1a4658_55%,transparent_100%),radial-gradient(ellipse_42px_7px_at_52px_0,#1f5264_0%,transparent_100%),linear-gradient(to_bottom,#2a6877_0%,#245f70_45%,#1c5163_100%)]">
      <div className={`${SEGOE} flex w-[713px] shrink-0 items-center pl-[26px] text-[14.350px] leading-[20px]`}>
        <svg className="mb-[4px]" width="27" height="25" viewBox="0 0 27 25">
          <defs>
            <linearGradient id="cloud" x1="0" y1="0" x2="0" y2="1">
              <stop offset="0" stopColor="#9fbfeb" />
              <stop offset="1" stopColor="#eef3fb" />
            </linearGradient>
          </defs>
          <path d="M9.500.8c5 2.500 7.300 7 4.500 11.200-3 4.500-10.500 4.200-13.700-1.800C5 11.500 10 7.500 9.500.8z" fill="#fdb913" />
          <path d="M7.500 24.300a5 5 0 0 1-.6-10C8 11 10.500 9.200 13.800 9.200c3 0 5.400 1.700 6.500 4 3.800-.3 6.500 2.300 6.500 5.500 0 3.300-2.500 5.600-5.600 5.600z" fill="url(#cloud)" />
        </svg>
        <div className="mt-[2px] ml-[12px] flex flex-col">
          <span className="text-[#08171b]">80°F</span>
          <span className="text-[#10333d]">Partly cloudy</span>
        </div>
      </div>
      <TaskbarApps />
      <Tray />
    </div>
  );
}

export default function App() {
  return (
    <div className="flex h-[1080px] w-[1920px] flex-col overflow-hidden bg-white font-[Roboto,sans-serif] text-[17.480px]">
      <TabStrip />
      <Toolbar />
      <div className="flex h-[924px] shrink-0">
        <Sidebar />
        <div className="flex w-[1845px] shrink-0 flex-col">
          <SiteHeader />
          <StatusStrip />
          <DemographicsForm />
          <CookieBar />
        </div>
        <div className="flex w-[20px] justify-center bg-[#f4f4f4] pt-1">
          <div className="h-[774px] w-[12px] rounded-full bg-[#b5b5b5]" />
        </div>
      </div>
      <Taskbar />
    </div>
  );
}
